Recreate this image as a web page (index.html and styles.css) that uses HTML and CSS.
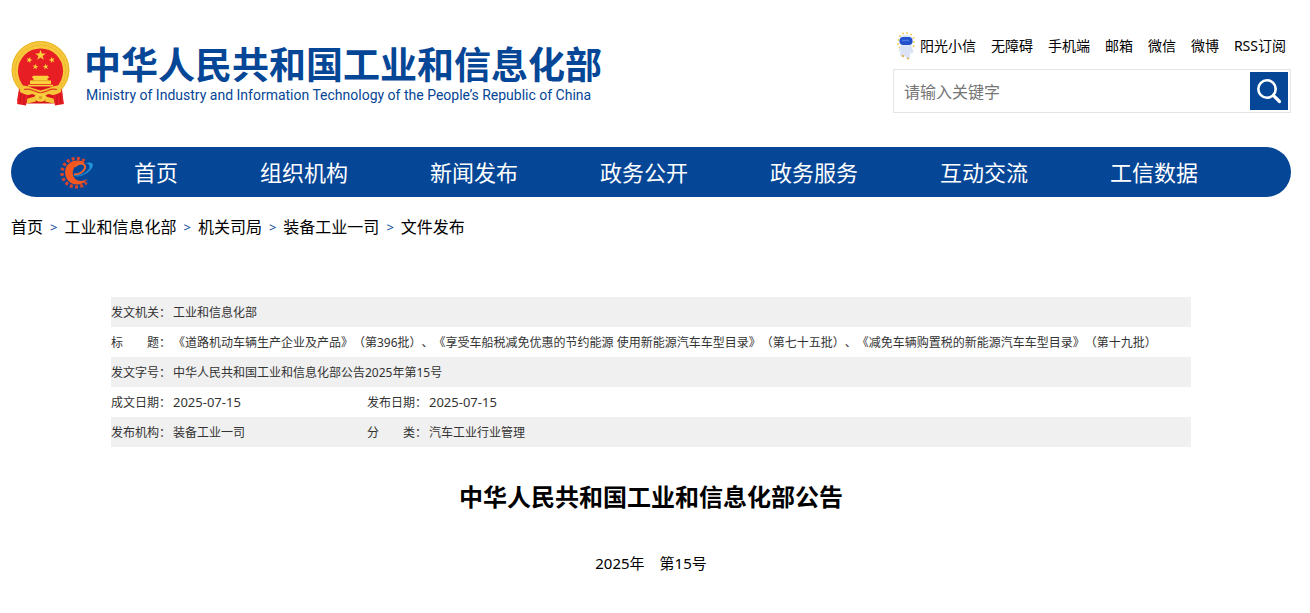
FILE: index.html
```html
<!DOCTYPE html>
<html lang="zh-CN">
<head>
<meta charset="utf-8">
<meta name="viewport" content="width=device-width, initial-scale=1">
<title>中华人民共和国工业和信息化部公告</title>
<link rel="stylesheet" href="styles.css">
</head>
<body>
<div class="page">
  <header class="header">
    <a class="brand" href="#">
      <svg class="emblem" viewBox="0 0 60 66" aria-hidden="true">
        <defs>
          <polygon id="star" points="0,-1 .23,-.31 .95,-.31 .37,.12 .59,.81 0,.38 -.59,.81 -.37,.12 -.95,-.31 -.23,-.31"/>
        </defs>
        <circle cx="29.5" cy="30" r="29" fill="#f6c83a"/>
        <circle cx="29.5" cy="30" r="28.3" fill="none" stroke="#e9b530" stroke-width="1"/>
        <circle cx="29.5" cy="30.5" r="25.3" fill="none" stroke="#e5b030" stroke-width=".8" stroke-dasharray="5 1"/>
        <circle cx="29.5" cy="31" r="22.6" fill="#e71f25"/>
        <g fill="#fbd23c">
          <use href="#star" transform="translate(29.5 15.3) scale(5.6)"/>
          <use href="#star" transform="translate(18.3 20) rotate(15) scale(3.2)"/>
          <use href="#star" transform="translate(40.9 20) rotate(-15) scale(3.2)"/>
          <use href="#star" transform="translate(24.4 26.8) rotate(10) scale(3.1)"/>
          <use href="#star" transform="translate(34.7 26.8) rotate(-10) scale(3.1)"/>
          <path d="M22 35.8h15l1.2 2.3h-1.6v2.500h3.400v3.500H19v-3.500h3.400v-2.500h-1.600z"/>
        </g>
        <path d="M20 40.700h19" stroke="#d99a20" stroke-width=".8"/>
        <path d="M8 49l4-3.500h35l4 3.500 1 12-10 2.500H17L6 61z" fill="#d8151d"/>
        <path d="M8 46c5-1 9 0 13 2l8.500 2.500L38 48c4-2 8-3 13-2l-1 6c-4 3-8 4-12 2l-8.500 3-8.500-3c-4 2-8 1-12-2z" fill="#f5c637"/>
        <path d="M13 49.500c4-1 7 0 9 1l7.500 2.500 7.500-2.500c2-1 5-2 9-1" fill="none" stroke="#e0371f" stroke-width="1.200"/>
        <path d="M17 45.600h25" stroke="#fbd23c" stroke-width="1.600"/>
        <ellipse cx="29.500" cy="57.500" rx="6" ry="4.200" fill="#f8cf40"/>
        <circle cx="29.500" cy="57.500" r="1.700" fill="#dca022"/>
        <path d="M15 59l9-2.500 1 5-9 2zM44 59l-9-2.500-1 5 9 2z" fill="#f5c637"/>
        <path d="M8 52l-2 12 9 1.500 2-10zM51 52l2 12-9 1.500-2-10z" fill="#e71f25"/>
        <path d="M10 54l-1 10M13 55v10M49 54l1 10M46 55v10" stroke="#b90f18" stroke-width=".8"/>
      </svg>
      <span class="brand-text">
        <span class="brand-cn">中华人民共和国工业和信息化部</span>
        <span class="brand-en" lang="en">Ministry of Industry and Information Technology of the People’s Republic of China</span>
      </span>
    </a>
    <div class="tools">
      <nav class="quick" aria-label="快捷入口">
        <a class="robot-link" href="#">
          <svg class="robot" viewBox="0 0 18 28" aria-hidden="true">
            <g fill="#f3cf55">
              <circle cx="1.500" cy="8" r="1"/><circle cx="3" cy="4" r="1"/><circle cx="6" cy="1.500" r="1"/><circle cx="10" cy="1" r="1"/><circle cx="14" cy="2.500" r="1"/><circle cx="16.500" cy="6" r="1"/><circle cx="17" cy="10" r="1"/><circle cx="1" cy="12" r="1"/><circle cx="2.500" cy="15.500" r="1"/><circle cx="16.500" cy="14" r="1"/>
            </g>
            <path d="M4 13h10l2.500 7-2 2-1.500-2v5l-1 2H9.500L8 23.500 7 25H4.500L3 23l1-5-1.500 2L1.500 19z" fill="#d9e3f5"/>
            <rect x="2" y="3" width="14" height="11.500" rx="5.700" fill="#dce7fa"/>
            <rect x="2.500" y="5" width="13" height="8" rx="3.800" fill="#2450c8"/>
            <path d="M5 8.500h7" stroke="#4a7bee" stroke-width="1.500"/>
            <path d="M5 23.500l2 1M10 26.500h2" stroke="#e8a83b" stroke-width="1.600"/>
          </svg>阳光小信</a>
        <a href="#">无障碍</a>
        <a href="#">手机端</a>
        <a href="#">邮箱</a>
        <a href="#">微信</a>
        <a href="#">微博</a>
        <a href="#">RSS订阅</a>
      </nav>
      <form class="search" role="search">
        <input class="search-input" type="text" placeholder="请输入关键字" aria-label="请输入关键字">
        <button class="search-button" type="button" aria-label="搜索">
          <svg class="search-icon" viewBox="0 0 26 26" aria-hidden="true">
            <circle cx="11" cy="11" r="8.700" fill="none" stroke="#fff" stroke-width="2.600"/>
            <path d="M17.300 17.300l6.200 6.200" stroke="#fff" stroke-width="3.200" stroke-linecap="round"/>
          </svg>
        </button>
      </form>
    </div>
  </header>

  <nav class="main-nav" aria-label="主导航">
    <svg class="gear" viewBox="0 0 33 33" aria-hidden="true">
      <g fill="none" stroke="#d8452c">
        <path d="M24.500 5.200A14.200 14.200 0 1 0 26.500 26.500" stroke-width="3.400" stroke-dasharray="2.900 2.300"/>
      </g>
      <path d="M25 7C18 2 8 5 5.500 13 3.500 21 9 28.500 17 28.500c4.500 0 8-2 10.500-5.500-5 3-10.500 2.500-13-1-3-4-2-10 2.500-13 2.500-1.500 5.500-2 8-2z" fill="#f4561f"/>
      <path d="M14 18.500c5 0 10-2.500 11-6.500 1-5-6-6-10-1.500" fill="none" stroke="#f0642c" stroke-width="2"/>
      <path d="M26 7c7-2 9 2 4 7.500-5 5.500-13 7.500-17 4.500 6 1 12-1.500 15-5 2.500-3 2-5.500-2-7z" fill="#2196dc"/>
      <path d="M16 20c5 0 11-3 14-8" fill="none" stroke="#1463b4" stroke-width=".8"/>
    </svg>
    <a href="#">首页</a>
    <a href="#">组织机构</a>
    <a href="#">新闻发布</a>
    <a href="#">政务公开</a>
    <a href="#">政务服务</a>
    <a href="#">互动交流</a>
    <a href="#">工信数据</a>
  </nav>

  <nav class="crumbs" aria-label="当前位置">
    <a href="#">首页</a><span class="sep">&gt;</span>
    <a href="#">工业和信息化部</a><span class="sep">&gt;</span>
    <a href="#">机关司局</a><span class="sep">&gt;</span>
    <a href="#">装备工业一司</a><span class="sep">&gt;</span>
    <a href="#">文件发布</a>
  </nav>

  <main class="article">
    <table class="meta">
      <colgroup><col class="col-label"><col class="col-value"><col class="col-label"><col></colgroup>
      <tbody>
        <tr><th scope="row">发文机关：</th><td colspan="3">工业和信息化部</td></tr>
        <tr><th scope="row">标　　题：</th><td colspan="3">《道路机动车辆生产企业及产品》（第396批）、《享受车船税减免优惠的节约能源 使用新能源汽车车型目录》（第七十五批）、《减免车辆购置税的新能源汽车车型目录》（第十九批）</td></tr>
        <tr><th scope="row">发文字号：</th><td colspan="3">中华人民共和国工业和信息化部公告2025年第15号</td></tr>
        <tr><th scope="row">成文日期：</th><td class="date">2025-07-15</td><th scope="row">发布日期：</th><td class="date">2025-07-15</td></tr>
        <tr><th scope="row">发布机构：</th><td>装备工业一司</td><th scope="row">分　　类：</th><td>汽车工业行业管理</td></tr>
      </tbody>
    </table>
    <h1 class="title">中华人民共和国工业和信息化部公告</h1>
    <p class="issue">2025年　第15号</p>
  </main>
</div>
</body>
</html>
```

FILE: styles.css
```css
* { box-sizing: border-box; }

body {
  margin: 0;
  background: #fff;
  color: #000;
  font-family: "Noto Sans", "Noto Sans CJK SC", sans-serif;
  font-size: 16px;
}

a { color: inherit; text-decoration: none; }

.page {
  max-width: 1310px;
  margin: 0 auto;
  padding: 0 19px 0 11px;
}

.header {
  display: flex;
  justify-content: space-between;
  align-items: flex-start;
  padding: 32px 0 34px;
}

.brand {
  display: flex;
  gap: 13px;
  padding-top: 8px;
  color: #054696;
}

.emblem { width: 60px; height: 66px; flex: none; }

.brand-text { display: flex; flex-direction: column; padding-top: 4px; }

.brand-cn {
  font-size: 37px;
  line-height: 42px;
  font-weight: 700;
  white-space: nowrap;
}

.brand-en {
  padding-left: 2px;
  font-family: Roboto, sans-serif;
  font-size: 14px;
  line-height: 18px;
  white-space: nowrap;
}

.tools {
  display: flex;
  flex-direction: column;
  gap: 9px;
  width: 398px;
}

.quick {
  display: flex;
  justify-content: flex-end;
  gap: 15px;
  padding-right: 5px;
  font-size: 14px;
  line-height: 28px;
  white-space: nowrap;
}

.robot-link { display: flex; gap: 5px; }
.robot { width: 18px; height: 28px; }

.search {
  display: flex;
  height: 44px;
  padding: 2px;
  border: 1px solid #e4e4e4;
}

.search-input {
  flex: 1;
  min-width: 0;
  padding: 2px 8px 0;
  border: 0;
  background: none;
  font: inherit;
  outline: none;
}

.search-input::placeholder { color: #757575; }

.search-button {
  display: grid;
  place-items: center;
  width: 38px;
  height: 38px;
  padding: 0;
  border: 0;
  background: #054696;
}

.search-icon { width: 26px; height: 26px; }

.main-nav {
  display: flex;
  align-items: center;
  height: 50px;
  padding-left: 49px;
  border-radius: 25px;
  background: #054696;
  color: #fff;
  font-size: 22px;
  line-height: 48px;
  white-space: nowrap;
}

.main-nav a { padding: 0 41px; }
.gear { width: 33px; height: 33px; flex: none; }

.crumbs {
  display: flex;
  gap: 7px;
  padding-top: 18px;
  line-height: 24px;
  white-space: nowrap;
}

.sep {
  color: #054696;
  font-size: 13px;
}

.article {
  max-width: 1080px;
  margin: 0 auto;
  padding-top: 58px;
}

.meta {
  width: 100%;
  table-layout: fixed;
  border-collapse: collapse;
  color: #333;
  font-size: 12px;
  line-height: 18px;
  text-spacing-trim: space-all;
}

.meta tr:nth-child(odd) { background: #f0f0f0; }
.meta th, .meta td { padding: 7px 0 5px; text-align: left; font-weight: 400; }
.meta th { white-space: nowrap; }
.meta .date { padding: 6px 0; font-size: 13px; }
.col-label { width: 62px; }
.col-value { width: 194px; }

.title {
  margin: 32px 0 0;
  font-size: 24px;
  line-height: 36px;
  text-align: center;
}

.issue {
  margin: 36px 0 0;
  font-size: 15px;
  line-height: 24px;
  text-align: center;
}
```
